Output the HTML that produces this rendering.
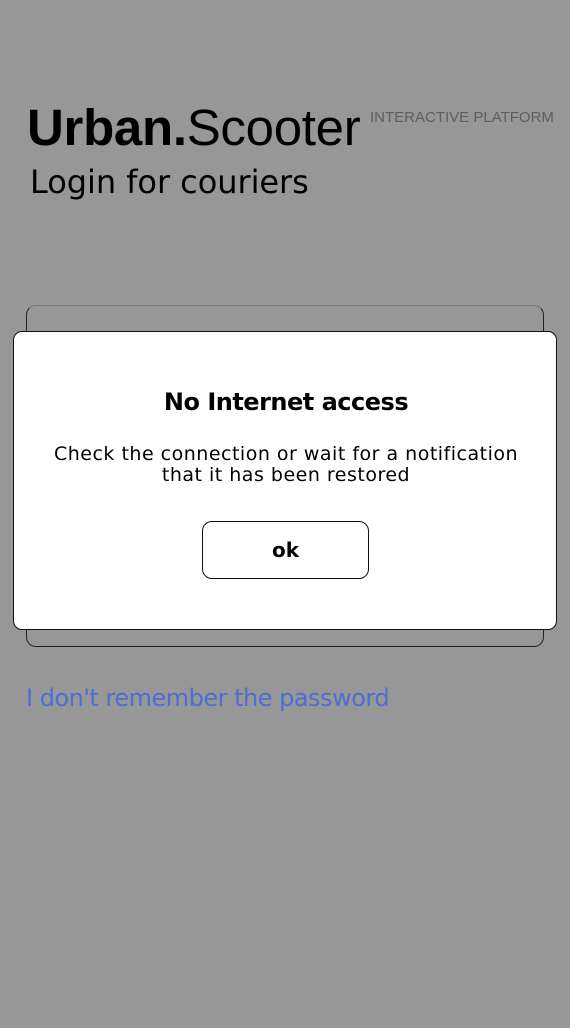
<!DOCTYPE html>
<html><head><meta charset="utf-8"><style>
*{margin:0;padding:0;box-sizing:border-box}
body{width:570px;height:1028px;background:#979797;font-family:"DejaVu Sans","Liberation Sans",sans-serif;position:relative;overflow:hidden;color:#000}
.abs{position:absolute;white-space:nowrap}
#brand{left:27px;top:99px;font-family:"Liberation Sans",sans-serif;font-size:51px;line-height:58px;letter-spacing:-0.3px}
#plat{left:370px;top:109px;font-family:"Liberation Sans",sans-serif;font-size:15px;color:#5e5e5e}
#login{left:30px;top:161px;font-size:32px;line-height:42px;letter-spacing:-0.05px}
#bg{left:26px;top:305px;width:518px;height:342px;border:1.5px solid #222;border-radius:10px;border-top-color:#777}
#dlg{left:13px;top:331px;width:544px;height:299px;background:#fff;border:1.5px solid #111;border-radius:9px}
#t{left:0;width:544px;top:56px;text-align:center;font-size:24px;font-weight:bold;letter-spacing:-0.5px}
#b{left:0;width:544px;top:112px;text-align:center;font-size:19px;line-height:21px;letter-spacing:0.5px}
#ok{left:188px;top:189px;width:167px;height:58px;border:1.5px solid #111;border-radius:10px;text-align:center;line-height:56px;font-size:20px;font-weight:bold}
#link{left:26px;top:684px;font-size:24px;color:#4b6fd3;letter-spacing:-0.5px}
</style></head><body>
<div class="abs" id="brand"><b>Urban.</b>Scooter</div>
<div class="abs" id="plat">INTERACTIVE PLATFORM</div>
<div class="abs" id="login">Login for couriers</div>
<div class="abs" id="bg"></div>
<div class="abs" id="dlg">
<div class="abs" id="t">No Internet access</div>
<div class="abs" id="b">Check the connection or wait for a notification<br>that it has been restored</div>
<div class="abs" id="ok">ok</div>
</div>
<div class="abs" id="link">I don't remember the password</div>
</body></html>
